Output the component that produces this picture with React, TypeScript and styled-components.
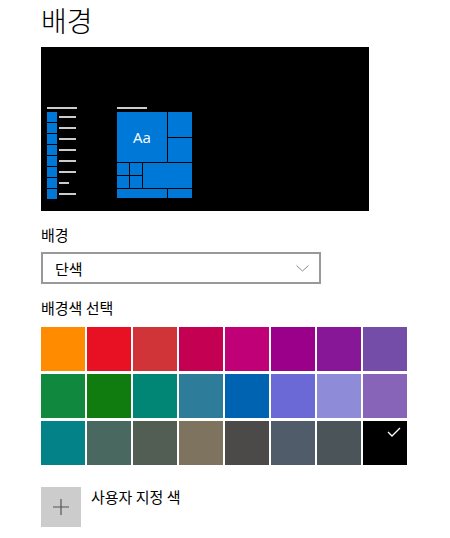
import * as React from 'react'
import styled, { createGlobalStyle } from 'styled-components'

const GlobalStyle = createGlobalStyle`
  body {
    margin: 0;
    background: #fff;
    font-family: "Noto Sans CJK KR", "Noto Sans", sans-serif;
    color: #000;
  }
`

const Page = styled.div`
  padding: 0 0 0 41px;
  width: 450px;
  height: 538px;
  box-sizing: border-box;
`

const Title = styled.h1`
  margin: 0;
  padding-top: 1px;
  font-size: 28px;
  font-weight: 300;
  line-height: 38px;
  height: 46px;
`

const Preview = styled.div`
  width: 328px;
  height: 164px;
  background: #000;
  box-sizing: border-box;
  padding: 60px 0 0 6px;
  display: flex;
  gap: 40px;
`

const StartList = styled.div`
  width: 30px;
  display: flex;
  flex-direction: column;
`

const Bar = styled.div<{ $w: number }>`
  width: ${p => p.$w}px;
  height: 2px;
  background: #cccccc;
`

const ListHeader = styled(Bar)`
  margin-bottom: 3px;
`

const ListRows = styled.div`
  display: flex;
  flex-direction: column;
  gap: 1px;
`

const ListRow = styled.div`
  display: flex;
  align-items: center;
  gap: 2px;
`

const ListIcon = styled.div`
  width: 10px;
  height: 10px;
  background: #0078d7;
`

const TileColumn = styled.div`
  display: flex;
  flex-direction: column;
`

const TileGrid = styled.div`
  display: grid;
  grid-template-columns: 12px 12px 24px 24px;
  grid-template-rows: 25px 24px 12px 12px 9px;
  gap: 1px;
`

const Tile = styled.div<{ $c: string; $r: string }>`
  grid-column: ${p => p.$c};
  grid-row: ${p => p.$r};
  background: #0078d7;
  display: flex;
  align-items: center;
  justify-content: center;
  color: #fff;
  font-family: "Open Sans", "Liberation Sans", sans-serif;
  font-size: 15px;
`

const Label = styled.div`
  font-size: 15px;
  line-height: 20px;
`

const BgLabel = styled(Label)`
  margin-top: 14px;
`

const Select = styled.div`
  margin-top: 7px;
  width: 280px;
  height: 32px;
  box-sizing: border-box;
  border: 2px solid #999999;
  display: flex;
  align-items: center;
  justify-content: space-between;
  padding: 0 10px 0 12px;
  font-size: 15px;
`

const ColorLabel = styled(Label)`
  margin-top: 14px;
`

const Swatches = styled.div`
  margin-top: 9px;
  display: grid;
  grid-template-columns: repeat(8, 44px);
  grid-auto-rows: 44px;
  column-gap: 2px;
  row-gap: 3px;
`

const Swatch = styled.div<{ $bg: string }>`
  position: relative;
  background: ${p => p.$bg};
`

const Check = styled.svg`
  position: absolute;
  top: 6px;
  right: 6px;
`

const CustomRow = styled.div`
  margin-top: 22px;
  display: flex;
  align-items: flex-start;
  gap: 10px;
`

const PlusBox = styled.div`
  width: 40px;
  height: 40px;
  background: #cccccc;
  display: flex;
  align-items: center;
  justify-content: center;
`

const CustomText = styled.div`
  font-size: 15px;
  line-height: 20px;
`

const colors = [
  '#ff8c00', '#e81123', '#d13438', '#c30052', '#bf0077', '#9a0089', '#881798', '#744da9',
  '#10893e', '#107c10', '#018574', '#2d7d9a', '#0063b1', '#6b69d6', '#8e8cd8', '#8764b8',
  '#038387', '#486860', '#525e54', '#7e735f', '#4c4a48', '#515c6b', '#4a5459', '#000000',
]

const listLines = [17, 17, 17, 17, 17, 17, 10, 17]

export default function App() {
  return (
    <Page>
      <GlobalStyle />
      <Title>배경</Title>
      <Preview>
        <StartList>
          <ListHeader $w={30} />
          <ListRows>
            {listLines.map((w, i) => (
              <ListRow key={i}>
                <ListIcon />
                <Bar $w={w} />
              </ListRow>
            ))}
          </ListRows>
        </StartList>
        <TileColumn>
          <ListHeader $w={30} />
          <TileGrid>
            <Tile $c="1 / 4" $r="1 / 3">Aa</Tile>
            <Tile $c="4" $r="1" />
            <Tile $c="4" $r="2" />
            <Tile $c="1" $r="3" />
            <Tile $c="2" $r="3" />
            <Tile $c="1" $r="4" />
            <Tile $c="2" $r="4" />
            <Tile $c="3 / 5" $r="3 / 5" />
            <Tile $c="1 / 4" $r="5" />
            <Tile $c="4" $r="5" />
          </TileGrid>
        </TileColumn>
      </Preview>
      <BgLabel>배경</BgLabel>
      <Select>
        <span>단색</span>
        <svg width="13" height="7" viewBox="0 0 13 7">
          <path d="M0.5 0.5 L6.5 6 L12.5 0.5" fill="none" stroke="#8a8a8a" strokeWidth="1" />
        </svg>
      </Select>
      <ColorLabel>배경색 선택</ColorLabel>
      <Swatches>
        {colors.map((c, i) => (
          <Swatch key={i} $bg={c}>
            {i === colors.length - 1 && (
              <Check width="14" height="10" viewBox="0 0 14 10">
                <path d="M1 5 L5 9 L13 1" fill="none" stroke="#fff" strokeWidth="1.3" />
              </Check>
            )}
          </Swatch>
        ))}
      </Swatches>
      <CustomRow>
        <PlusBox>
          <svg width="16" height="16" viewBox="0 0 16 16">
            <path d="M8 0 V16 M0 8 H16" stroke="#555" strokeWidth="1.2" />
          </svg>
        </PlusBox>
        <CustomText>사용자 지정 색</CustomText>
      </CustomRow>
    </Page>
  )
}
